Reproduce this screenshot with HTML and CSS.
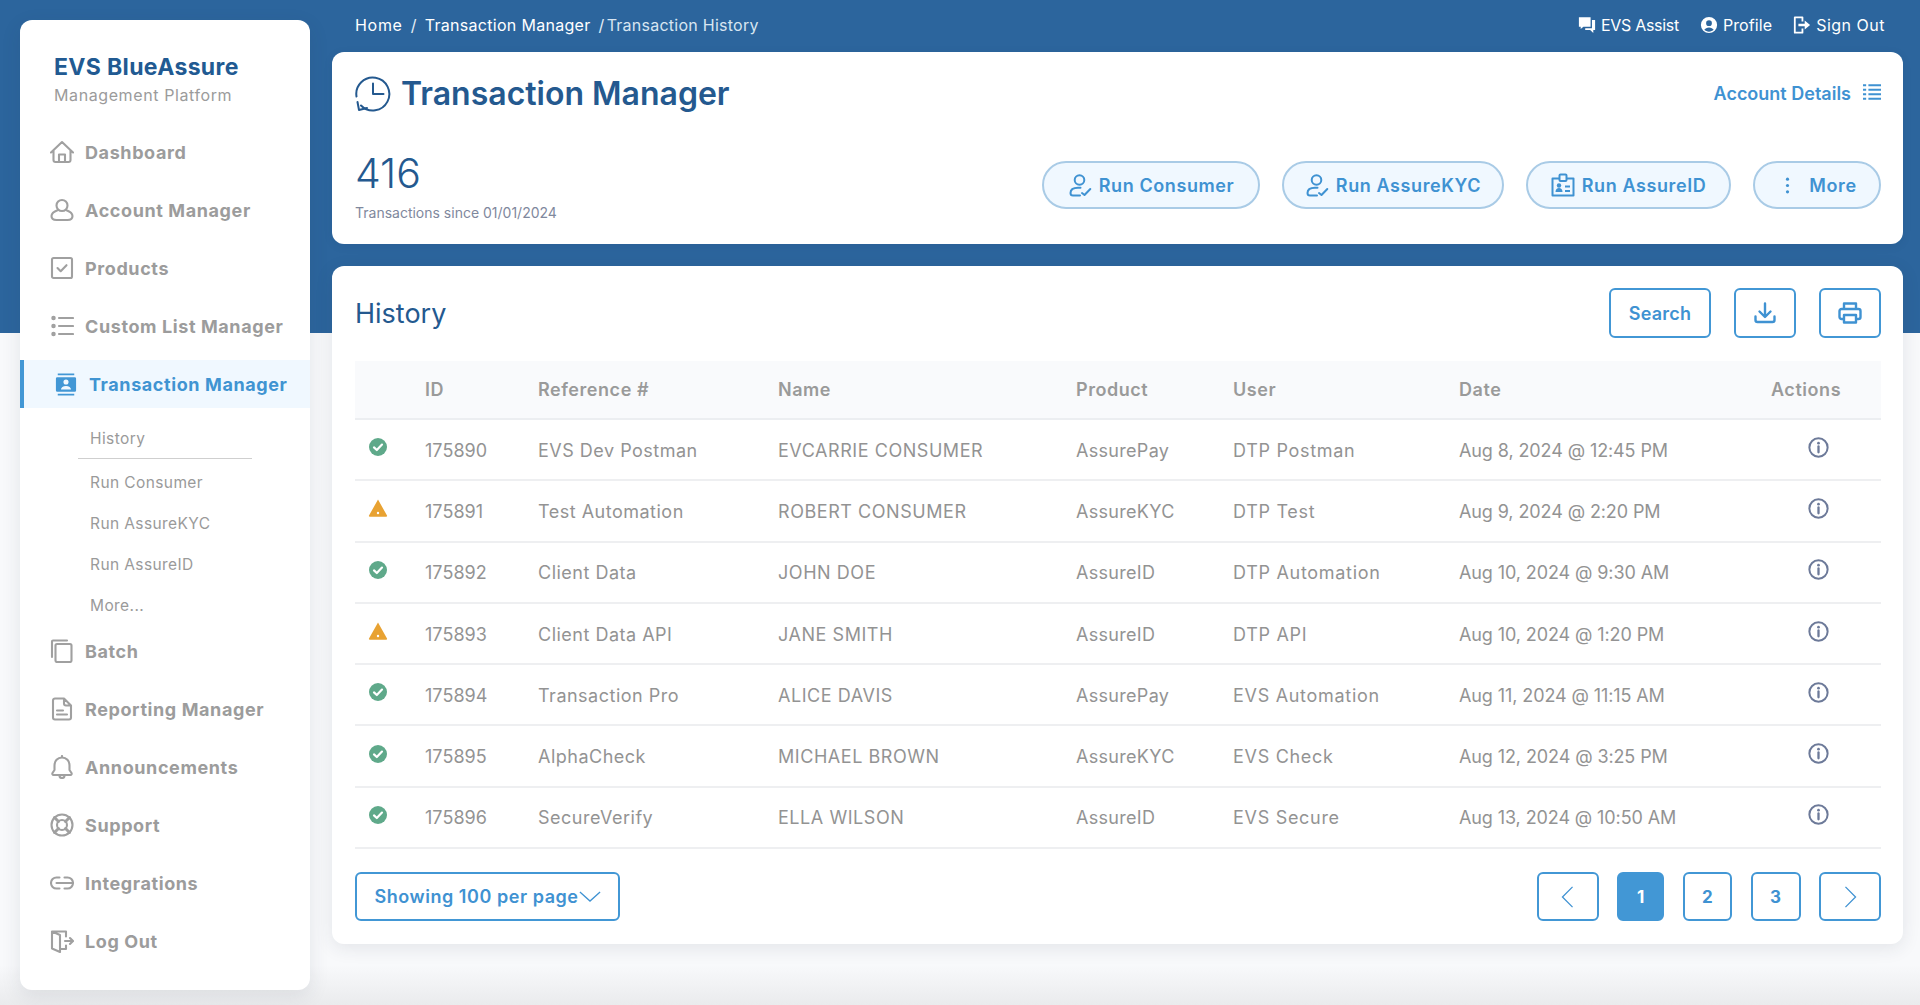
FILE: index.html
```html
<!DOCTYPE html>
<html lang="en">
<head>
<meta charset="utf-8">
<title>Transaction Manager</title>
<link rel="stylesheet" href="styles.css">
</head>
<body>
<svg class="sprite" aria-hidden="true">
  <symbol id="ok" viewBox="0 0 20 20"><circle cx="10" cy="10" r="9" fill="#5fa98a"/><path d="M6 10.400l2.800 2.600L14 7.600" fill="none" stroke="#fff" stroke-width="2.200" stroke-linecap="round" stroke-linejoin="round"/></symbol>
  <symbol id="warn" viewBox="0 0 20 20"><path d="M10 1.500L19 17.500a.8.8 0 0 1-.7 1.200H1.700a.8.8 0 0 1-.7-1.200z" fill="#e8a232"/><circle cx="10" cy="15" r="1.200" fill="#fff"/></symbol>
  <symbol id="info" viewBox="0 0 20 20"><circle cx="10" cy="10" r="8.700" fill="none" stroke="currentColor" stroke-width="1.900"/><path d="M10 9v5.500" stroke="currentColor" stroke-width="2.200" stroke-linecap="round"/><circle cx="10" cy="5.900" r="1.300" fill="currentColor"/></symbol>
  <symbol id="person" viewBox="0 0 24 24"><g fill="none" stroke="currentColor" stroke-width="2" stroke-linecap="round" stroke-linejoin="round"><circle cx="11.500" cy="7" r="4.800"/><path d="M12.500 14.700H10c-4 0-7.500 1.500-7.500 5.300 0 1.500 1 2.500 2.500 2.500h7"/><path d="M14 20l2.500 2 5.800-6"/></g></symbol>
</svg>

<div class="app">
  <aside class="sidebar">
    <div class="brand">
      <div class="brand-name">EVS BlueAssure</div>
      <div class="brand-sub">Management Platform</div>
    </div>
    <nav class="nav">
      <a class="nav-item"><svg class="nav-icon" viewBox="0 0 24 24"><path d="M1 12.500L12 2l11 10.500M3.500 10.500V20a2 2 0 0 0 2 2h13a2 2 0 0 0 2-2v-9.500M9 22v-7.500h6V22"/></svg>Dashboard</a>
      <a class="nav-item"><svg class="nav-icon" viewBox="0 0 24 24"><circle cx="12" cy="7.500" r="5.500"/><path d="M8 12C4 13.500 1.500 15.500 1.500 18c0 2.500 2 4 5 4h11c3 0 5-1.500 5-4 0-2.500-2.500-4.500-6.500-6"/></svg>Account Manager</a>
      <a class="nav-item"><svg class="nav-icon" viewBox="0 0 24 24"><rect x="2" y="2" width="20" height="20" rx="1.500"/><path d="M7.500 12l3.200 3.200 5.800-6"/></svg>Products</a>
      <a class="nav-item"><svg class="nav-icon" viewBox="0 0 24 24"><path d="M9 4h14M9 12h14M9 20h14"/><circle cx="3.500" cy="4" r="1.200"/><circle cx="3.500" cy="12" r="1.200"/><circle cx="3.500" cy="20" r="1.200"/></svg>Custom List Manager</a>
      <a class="nav-item nav-item-active"><svg class="nav-icon-solid" viewBox="0 0 24 24"><path d="M3 0h18v2H3zM3 22h18v2H3z"/><path fill-rule="evenodd" d="M2.500 4h19A1.500 1.500 0 0 1 23 5.500v13a1.500 1.500 0 0 1-1.500 1.500h-19A1.500 1.500 0 0 1 1 18.500v-13A1.500 1.500 0 0 1 2.500 4zM12 6.500a2.800 2.800 0 1 0 0 5.600 2.800 2.800 0 0 0 0-5.600zM6.500 17.500h11c0-2.500-2.300-4-5.500-4s-5.500 1.500-5.500 4z"/></svg>Transaction Manager</a>
      <div class="subnav">
        <a class="sub-item sub-item-current">History</a>
        <a class="sub-item">Run Consumer</a>
        <a class="sub-item">Run AssureKYC</a>
        <a class="sub-item">Run AssureID</a>
        <a class="sub-item">More...</a>
      </div>
      <a class="nav-item"><svg class="nav-icon" viewBox="0 0 24 24"><path d="M2 18V2.500A1 1 0 0 1 3 1.500h14"/><rect x="5.500" y="5" width="16" height="18" rx="1.500"/></svg>Batch</a>
      <a class="nav-item"><svg class="nav-icon" viewBox="0 0 24 24"><path d="M14 1.500H5a2 2 0 0 0-2 2v17a2 2 0 0 0 2 2h14a2 2 0 0 0 2-2V8.500zM14 1.500v5a2 2 0 0 0 2 2h5M7 13.500h6M7 17.500h10"/></svg>Reporting Manager</a>
      <a class="nav-item"><svg class="nav-icon" viewBox="0 0 24 24"><path d="M12 2.500c-4.500 0-7.500 3.500-7.500 8v4.500L2.500 18c-.5 1 0 2 1 2h17c1 0 1.500-1 1-2l-2-3v-4.500c0-4.500-3-8-7.500-8zM12 1v1.500M9.500 20.500c0 1.500 1 2.500 2.500 2.500s2.500-1 2.500-2.500"/></svg>Announcements</a>
      <a class="nav-item"><svg class="nav-icon" viewBox="0 0 24 24"><circle cx="12" cy="12" r="10.500"/><circle cx="12" cy="12" r="5"/><path d="M4.500 4.500l4 4M19.500 4.500l-4 4M4.500 19.500l4-4M19.500 19.500l-4-4" stroke-width="3"/></svg>Support</a>
      <a class="nav-item"><svg class="nav-icon" viewBox="0 0 24 24"><path d="M9.500 6.500H6.500a5.500 5.500 0 0 0 0 11h3M14.500 6.500h3a5.500 5.500 0 0 1 0 11h-3M6.500 12h16"/></svg>Integrations</a>
      <a class="nav-item"><svg class="nav-icon" viewBox="0 0 24 24"><path d="M2 2.500v17l8 3.500V6L2 2.500h14v5M16 16.500v3.500h-6M15 12h8M20 9l3 3-3 3"/></svg>Log Out</a>
    </nav>
  </aside>

  <main class="main">
    <header class="topbar">
      <div class="crumbs">
        <a class="crumb-home">Home</a><span class="crumb-sep">/</span><a>Transaction Manager</a><span class="crumb-sep crumb-sep-tight">/</span><span class="crumb-current">Transaction History</span>
      </div>
      <div class="top-links">
        <a class="top-link link-assist"><svg class="top-icon" viewBox="0 0 20 20"><path fill="#fff" d="M1 1.500h13v10.500H6L3 14.500V12H1zM15.500 4.500H19v11h-2v3.500l-3.500-3.500H8v-2h7.500z"/></svg>EVS Assist</a>
        <a class="top-link"><svg class="top-icon" viewBox="0 0 20 20"><path fill="#fff" fill-rule="evenodd" d="M10 1a9 9 0 1 1 0 18 9 9 0 0 1 0-18zM10 4.800a3.200 3.200 0 1 0 0 6.400 3.200 3.200 0 0 0 0-6.400zM4.800 15.400c1.200 1.300 3.100 2 5.200 2s4-.7 5.200-2c-.8-1.600-3-2.700-5.200-2.700s-4.400 1.100-5.200 2.700z"/></svg>Profile</a>
        <a class="top-link link-signout"><svg class="top-icon" viewBox="0 0 20 20"><path fill="none" stroke="#fff" stroke-width="2" stroke-linejoin="round" d="M10.500 6V1.500H2v17h8.500V14"/><path fill="#fff" d="M6 8.700h7V5l6 5-6 5v-3.700H6z"/></svg>Sign Out</a>
      </div>
    </header>

    <section class="summary">
      <div class="summary-top">
        <h1 class="page-title"><svg class="title-icon" viewBox="0 0 36 36"><path d="M1.500 20.500A16.500 16.500 0 1 1 6 29.500"/><path d="M18 7.500V18h10.500M2.500 26l1.500 8 8-2"/></svg>Transaction Manager</h1>
        <a class="details-link">Account Details<svg class="details-icon" viewBox="0 0 20 20"><path d="M6 2.500h14M6 7.500h14M6 12.500h14M6 17.500h14"/><path d="M0 2.500h3.500M0 7.500h3.500M0 12.500h3.500M0 17.500h3.500"/></svg></a>
      </div>
      <div class="summary-bottom">
        <div class="stat">
          <div class="stat-num">416</div>
          <div class="stat-cap">Transactions since 01/01/2024</div>
        </div>
        <div class="pill-row">
          <a class="pill pill-consumer"><svg class="pill-icon"><use href="#person"/></svg>Run Consumer</a>
          <a class="pill pill-kyc"><svg class="pill-icon"><use href="#person"/></svg>Run AssureKYC</a>
          <a class="pill pill-id"><svg class="pill-icon" viewBox="0 0 24 24"><g fill="none" stroke="currentColor" stroke-width="2" stroke-linejoin="round"><path d="M8.500 5.500H1.500v17h21v-17h-7"/><rect x="8.500" y="1.500" width="7" height="6.500" rx="1"/><path d="M14 13.500h5M14 18h5"/></g><circle cx="8" cy="12.500" r="2.200" fill="currentColor"/><path d="M4.500 19c0-2.500 1.500-4 3.500-4s3.500 1.500 3.500 4z" fill="currentColor"/></svg>Run AssureID</a>
          <a class="pill pill-more"><svg class="pill-icon pill-icon-small" viewBox="0 0 6 18"><circle cx="3" cy="3" r="1.500" fill="currentColor"/><circle cx="3" cy="9" r="1.500" fill="currentColor"/><circle cx="3" cy="15" r="1.500" fill="currentColor"/></svg>More</a>
        </div>
      </div>
    </section>

    <section class="history">
      <div class="history-head">
        <h2 class="history-title">History</h2>
        <div class="tools">
          <a class="box-btn btn-search">Search</a>
          <a class="box-btn btn-icon"><svg class="tool-icon" viewBox="0 0 24 24"><path d="M12 2.500v13M6.500 10.500l5.500 5.500 5.500-5.500M2.500 15.500v3.500a2 2 0 0 0 2 2h15a2 2 0 0 0 2-2v-3.500"/></svg></a>
          <a class="box-btn btn-icon"><svg class="tool-icon" viewBox="0 0 24 24"><path d="M6 8V2.500h12V8M6 18H3.500a2 2 0 0 1-2-2v-6a2 2 0 0 1 2-2h17a2 2 0 0 1 2 2v6a2 2 0 0 1-2 2H18M6 14h12v7.500H6z"/></svg></a>
        </div>
      </div>

      <table class="grid">
        <colgroup>
          <col class="c-status"><col class="c-id"><col class="c-ref"><col class="c-name"><col class="c-prod"><col class="c-user"><col class="c-date"><col class="c-act">
        </colgroup>
        <thead>
          <tr><th></th><th>ID</th><th>Reference #</th><th>Name</th><th>Product</th><th>User</th><th>Date</th><th>Actions</th></tr>
        </thead>
        <tbody>
          <tr><td class="cell-status"><svg class="status"><use href="#ok"/></svg></td><td>175890</td><td>EVS Dev Postman</td><td>EVCARRIE CONSUMER</td><td>AssurePay</td><td>DTP Postman</td><td>Aug 8, 2024 @ 12:45 PM</td><td class="cell-act"><svg class="info"><use href="#info"/></svg></td></tr>
          <tr><td class="cell-status"><svg class="status"><use href="#warn"/></svg></td><td>175891</td><td>Test Automation</td><td>ROBERT CONSUMER</td><td>AssureKYC</td><td>DTP Test</td><td>Aug 9, 2024 @ 2:20 PM</td><td class="cell-act"><svg class="info"><use href="#info"/></svg></td></tr>
          <tr><td class="cell-status"><svg class="status"><use href="#ok"/></svg></td><td>175892</td><td>Client Data</td><td>JOHN DOE</td><td>AssureID</td><td>DTP Automation</td><td>Aug 10, 2024 @ 9:30 AM</td><td class="cell-act"><svg class="info"><use href="#info"/></svg></td></tr>
          <tr><td class="cell-status"><svg class="status"><use href="#warn"/></svg></td><td>175893</td><td>Client Data API</td><td>JANE SMITH</td><td>AssureID</td><td>DTP API</td><td>Aug 10, 2024 @ 1:20 PM</td><td class="cell-act"><svg class="info"><use href="#info"/></svg></td></tr>
          <tr><td class="cell-status"><svg class="status"><use href="#ok"/></svg></td><td>175894</td><td>Transaction Pro</td><td>ALICE DAVIS</td><td>AssurePay</td><td>EVS Automation</td><td>Aug 11, 2024 @ 11:15 AM</td><td class="cell-act"><svg class="info"><use href="#info"/></svg></td></tr>
          <tr><td class="cell-status"><svg class="status"><use href="#ok"/></svg></td><td>175895</td><td>AlphaCheck</td><td>MICHAEL BROWN</td><td>AssureKYC</td><td>EVS Check</td><td>Aug 12, 2024 @ 3:25 PM</td><td class="cell-act"><svg class="info"><use href="#info"/></svg></td></tr>
          <tr><td class="cell-status"><svg class="status"><use href="#ok"/></svg></td><td>175896</td><td>SecureVerify</td><td>ELLA WILSON</td><td>AssureID</td><td>EVS Secure</td><td>Aug 13, 2024 @ 10:50 AM</td><td class="cell-act"><svg class="info"><use href="#info"/></svg></td></tr>
        </tbody>
      </table>

      <div class="history-foot">
        <a class="box-btn per-page">Showing 100 per page<svg class="caret" viewBox="0 0 24 12"><path d="M1 1l11 10L23 1"/></svg></a>
        <div class="pager">
          <a class="box-btn page-arrow"><svg class="arrow" viewBox="0 0 14 24"><path d="M12.500 1L1.500 12l11 11"/></svg></a>
          <a class="box-btn page-num page-num-1 page-on">1</a>
          <a class="box-btn page-num page-num-2">2</a>
          <a class="box-btn page-num page-num-3">3</a>
          <a class="box-btn page-arrow"><svg class="arrow" viewBox="0 0 14 24"><path d="M1.500 1l11 11-11 11"/></svg></a>
        </div>
      </div>
    </section>
  </main>
</div>
</body>
</html>
```

FILE: styles.css
```css
* { box-sizing: border-box; }

html, body { height: 100%; }

body {
  margin: 0;
  overflow: hidden;
  font-family: "Inter", "Liberation Sans", sans-serif;
  color: #8f8f8f;
  background:
    linear-gradient(to bottom, #2c659d 0, #2c659d 333px, transparent 333px),
    linear-gradient(to bottom, #f8f9fb 0, #f8f9fb 965px, #eaebed 1005px);
}

a { color: inherit; text-decoration: none; }

.sprite { width: 0; height: 0; display: block; }

.app {
  display: flex;
  align-items: flex-start;
  padding-left: 20px;
  gap: 22px;
}

/* Sidebar */
.sidebar {
  width: 290px;
  height: 970px;
  margin-top: 20px;
  background: #fff;
  border-radius: 12px;
  box-shadow: 0 6px 20px rgba(40, 50, 70, .10);
}

.brand { padding: 34px 0 0 34px; height: 108px; }

.brand-name {
  font-size: 23px;
  line-height: 26px;
  font-weight: 700;
  color: #215a92;
  letter-spacing: .35px;
}

.brand-sub {
  margin-top: 5px;
  font-size: 16px;
  line-height: 20px;
  color: #9b9b9b;
  letter-spacing: .6px;
}

.nav { display: flex; flex-direction: column; }

.nav-item {
  display: flex;
  align-items: center;
  height: 48px;
  margin-bottom: 10px;
  padding-left: 30px;
  font-size: 18px;
  font-weight: 700;
  color: #9c9c9c;
  letter-spacing: .6px;
}

.nav-icon {
  width: 24px;
  height: 24px;
  margin-right: 11px;
  flex: none;
  fill: none;
  stroke: #a0a0a0;
  stroke-width: 2.100;
  stroke-linecap: round;
  stroke-linejoin: round;
}

.nav-item-active {
  margin-bottom: 0;
  padding-left: 31px;
  background: #f0f8ff;
  border-left: 4px solid #4297d5;
  color: #4094d2;
}

.nav-icon-solid {
  width: 22px;
  height: 27px;
  margin-right: 12px;
  flex: none;
  fill: #4297d5;
}

.subnav { padding: 10px 0 1px 58px; }

.sub-item {
  display: flex;
  align-items: center;
  width: 174px;
  height: 41px;
  padding-left: 12px;
  font-size: 15.500px;
  color: #9a9a9a;
  letter-spacing: .4px;
}

.sub-item-current {
  margin-bottom: 3px;
  box-shadow: inset 0 -1px 0 #cfcfcf;
}

/* Main */
.main { width: 1571px; }

.topbar {
  display: flex;
  justify-content: space-between;
  align-items: center;
  height: 52px;
  padding: 0 18px 2px 23px;
  color: #fff;
  font-size: 16px;
}

.crumbs { display: flex; align-items: center; letter-spacing: .3px; }

.crumb-home { letter-spacing: .7px; }
.crumb-sep { margin: 0 8px; color: #e5eef6; }
.crumb-sep-tight { margin: 0 2px 0 8px; }
.crumb-current { color: #d8e5f1; letter-spacing: .25px; }

.top-links { display: flex; gap: 21px; }

.top-link { display: flex; align-items: center; gap: 5px; letter-spacing: .1px; }
.link-assist { letter-spacing: -.3px; }
.link-signout { letter-spacing: .5px; }

.top-icon { width: 18px; height: 18px; flex: none; }

.summary {
  height: 192px;
  padding: 23px 22px 0 23px;
  background: #fff;
  border-radius: 12px;
  box-shadow: 0 2px 8px rgba(20, 50, 90, .10);
}

.summary-top {
  display: flex;
  justify-content: space-between;
  align-items: center;
  height: 37px;
}

.page-title {
  display: flex;
  align-items: center;
  gap: 10px;
  margin: 0;
  font-size: 32px;
  font-weight: 600;
  color: #24598f;
  letter-spacing: 0;
}

.title-icon {
  width: 36px;
  height: 36px;
  fill: none;
  stroke: #24598f;
  stroke-width: 2;
  stroke-linecap: round;
  stroke-linejoin: round;
}

.details-link {
  display: flex;
  align-items: center;
  gap: 12px;
  font-size: 18px;
  font-weight: 600;
  color: #3f92d2;
}

.details-icon {
  width: 18px;
  height: 18px;
  margin-top: -3px;
  fill: none;
  stroke: #3f92d2;
  stroke-width: 2.400;
}

.summary-bottom {
  display: flex;
  justify-content: space-between;
  align-items: flex-start;
  margin-top: 49px;
}

.stat { margin-top: -12px; }

.stat-num {
  font-size: 41px;
  line-height: 48px;
  font-weight: 300;
  color: #24598f;
}

.stat-cap {
  margin-top: 7px;
  font-size: 14px;
  line-height: 18px;
  color: #7f889d;
  letter-spacing: 0;
}

.pill-row { display: flex; gap: 22px; }

.pill {
  display: flex;
  align-items: center;
  justify-content: center;
  height: 48px;
  border: 2px solid #a9cbe6;
  border-radius: 24px;
  background: #f0f8ff;
  color: #3f92d2;
  font-size: 18px;
  font-weight: 600;
  letter-spacing: .6px;
  gap: 7px;
}

.pill-consumer { width: 218px; }
.pill-kyc { width: 222px; }
.pill-id { width: 205px; }
.pill-more { width: 128px; gap: 18px; padding-left: 7px; }

.pill-icon { width: 24px; height: 24px; flex: none; }
.pill-icon-small { width: 7px; height: 19px; }

.history {
  height: 678px;
  margin-top: 22px;
  padding: 22px 22px 22px 23px;
  background: #fff;
  border-radius: 12px;
  box-shadow: 0 4px 18px rgba(40, 50, 70, .10);
}

.history-head {
  display: flex;
  justify-content: space-between;
  align-items: center;
  height: 50px;
}

.history-title {
  margin: 0;
  font-size: 27px;
  font-weight: 400;
  color: #24598f;
}

.tools { display: flex; gap: 23px; }

.box-btn {
  display: flex;
  align-items: center;
  justify-content: center;
  height: 50px;
  border: 2px solid #4297d5;
  border-radius: 6px;
  color: #3f92d2;
  font-size: 18px;
  font-weight: 600;
  letter-spacing: .2px;
}

.btn-search { width: 102px; }
.btn-icon { width: 62px; }

.tool-icon {
  width: 24px;
  height: 24px;
  fill: none;
  stroke: #3f92d2;
  stroke-width: 2.400;
  stroke-linecap: round;
  stroke-linejoin: round;
}

.grid {
  width: 100%;
  margin-top: 23px;
  border-collapse: collapse;
  table-layout: fixed;
}

.c-status { width: 70px; }
.c-id { width: 113px; }
.c-ref { width: 240px; }
.c-name { width: 298px; }
.c-prod { width: 157px; }
.c-user { width: 226px; }
.c-date { width: 312px; }
.c-act { width: 110px; }

.grid th {
  height: 58px;
  padding: 0;
  background: #f9fafc;
  border-bottom: 2px solid #eceef1;
  text-align: left;
  font-size: 18px;
  font-weight: 600;
  color: #9a9a9a;
  letter-spacing: .55px;
}

.grid td {
  height: 61.300px;
  padding: 1px 0 0;
  border-bottom: 2px solid #eeeff1;
  font-size: 18px;
  color: #939393;
  letter-spacing: .3px;
}

.grid td:nth-child(2) { letter-spacing: .05px; }
.grid td:nth-child(3) { letter-spacing: .5px; }
.grid td:nth-child(4) { letter-spacing: .55px; }
.grid td:nth-child(6) { letter-spacing: .7px; }
.grid td:nth-child(7) { letter-spacing: -.1px; }

.grid .cell-status { padding: 0 0 0 13px; }

.status { display: block; width: 20px; height: 20px; margin: -5px 0 0 0; }

.grid .cell-act { padding: 0 0 0 37px; }

.info { display: block; width: 21px; height: 21px; margin-top: -5px; color: #6d7a99; }

.history-foot {
  display: flex;
  justify-content: space-between;
  margin-top: 23px;
}

.history-foot .box-btn { height: 49px; }

.per-page { width: 265px; gap: 0; letter-spacing: .55px; }

.caret {
  width: 22px;
  height: 11px;
  fill: none;
  stroke: #3f92d2;
  stroke-width: 1.400;
}

.pager { display: flex; gap: 18.400px; }

.page-arrow { width: 62px; }
.page-num { font-weight: 700; font-size: 17px; }
.page-num-1 { width: 47px; }
.page-num-2 { width: 49.500px; }
.page-num-3 { width: 50px; }
.page-on { background: #4297d5; color: #fff; }

.arrow {
  width: 13px;
  height: 22px;
  fill: none;
  stroke: #3f92d2;
  stroke-width: 1.400;
}
```
